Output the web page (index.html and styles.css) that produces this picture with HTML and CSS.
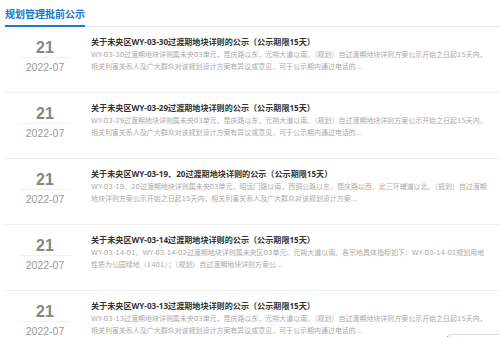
FILE: index.html
```html
<!DOCTYPE html>
<html lang="zh-CN">
  <head>
    <meta charset="utf-8">
    <title>规划管理批前公示</title>
    <meta name="viewport" content="width=device-width">
    <link rel="stylesheet" href="styles.css">
  </head>

  <body>
    <header class="list-head"><h2>规划管理批前公示</h2></header>

    <ul class="notice-list">
      <li class="notice">
        <div class="date"><span class="day">21</span><span class="month">2022-07</span></div>
        <div class="body">
          <h3>关于未央区WY-03-30过渡期地块详则的公示（公示期限15天）</h3>
          <p>WY-03-30过渡期地块详则属未央03单元，昆庆路以东，元朔大道以南。（规划）自过渡期地块详则方案公示开始之日起15天内，相关利害关系人及广大群众对该规划设计方案有异议或意见，可于公示期内通过电话的...</p>
        </div>
      </li>
      <li class="notice">
        <div class="date"><span class="day">21</span><span class="month">2022-07</span></div>
        <div class="body">
          <h3>关于未央区WY-03-29过渡期地块详则的公示（公示期限15天）</h3>
          <p>WY-03-29过渡期地块详则属未央03单元，昆庆路以东，元朔大道以南。（规划）自过渡期地块详则方案公示开始之日起15天内，相关利害关系人及广大群众对该规划设计方案有异议或意见，可于公示期内通过电话的...</p>
        </div>
      </li>
      <li class="notice">
        <div class="date"><span class="day">21</span><span class="month">2022-07</span></div>
        <div class="body">
          <h3>关于未央区WY-03-19、20过渡期地块详则的公示（公示期限15天）</h3>
          <p>WY-03-19、20过渡期地块详则属未央03单元，昭远门路以南，西铜公路以东，昆庆路以西，北三环辅道以北。（规划）自过渡期地块详则方案公示开始之日起15天内，相关利害关系人及广大群众对该规划设计方案...</p>
        </div>
      </li>
      <li class="notice">
        <div class="date"><span class="day">21</span><span class="month">2022-07</span></div>
        <div class="body">
          <h3>关于未央区WY-03-14过渡期地块详则的公示（公示期限15天）</h3>
          <p>WY-03-14-01、WY-03-14-02过渡期地块详则属未央区03单元，元朔大道以南。各宗地具体指标如下：WY-03-14-01规划用地性质为公园绿地（1401）；（规划）自过渡期地块详则方案公...</p>
        </div>
      </li>
      <li class="notice">
        <div class="date"><span class="day">21</span><span class="month">2022-07</span></div>
        <div class="body">
          <h3>关于未央区WY-03-13过渡期地块详则的公示（公示期限15天）</h3>
          <p>WY-03-13过渡期地块详则属未央03单元，昆庆路以东，元朔大道以南。（规划）自过渡期地块详则方案公示开始之日起15天内，相关利害关系人及广大群众对该规划设计方案有异议或意见，可于公示期内通过电话的...</p>
        </div>
      </li>
    </ul>

    <!-- floating helper tab, only its top edge shows -->
    <div class="float-tab"></div>
  </body>
</html>
```

FILE: styles.css
```css
html, body { margin: 0; padding: 0; background: #fff; }
body { font-family: "Noto Sans", "Noto Sans CJK SC", sans-serif; color: #333;
     width: 500px; height: 337px; overflow: hidden; position: relative; }

.list-head { display: flex; margin-left: 5px; border-bottom: 1px solid #e6e6e6; }
.list-head h2 { margin: 0 0 -1px 0; padding: 4px 0 1px; font-size: 10px; line-height: 20px;
     font-weight: bold; color: #1a73cc; border-bottom: 2px solid #1a78d2; }

.notice-list { list-style: none; margin: 0 0 0 5px; padding: 0; }
.notice { display: flex; height: 56px; padding-top: 9px; border-bottom: 1px solid #efefef; }

.date { width: 80px; flex: none; margin-top: 3px; display: flex; flex-direction: column; align-items: center; }
.date .day { width: 52px; text-align: center; font-size: 16px; line-height: 18px; font-weight: bold;
     color: #858585; border-bottom: 1px solid #f0f0f0; font-family: "Liberation Sans", Arial, sans-serif; }
.date .month { font-size: 10.5px; line-height: 18px; color: #999; font-family: "Liberation Sans", Arial, sans-serif; }

.body { margin-left: 6px; width: 399px; }
.body h3 { margin: 0; font-size: 8.1px; line-height: 12px; font-weight: bold; color: #333; white-space: nowrap; }
.body p { margin: 2px 0 0; font-family: "DejaVu Sans", "Noto Sans CJK SC", sans-serif;
     font-size: 6.97px; line-height: 11.5px; color: #aaa; }

.float-tab { position: absolute; left: 446px; top: 334px; width: 60px; height: 20px;
     border-top: 1px solid #dcdcdc; border-left: 1px solid #f26b1d; border-radius: 6px 0 0 0; }
```
